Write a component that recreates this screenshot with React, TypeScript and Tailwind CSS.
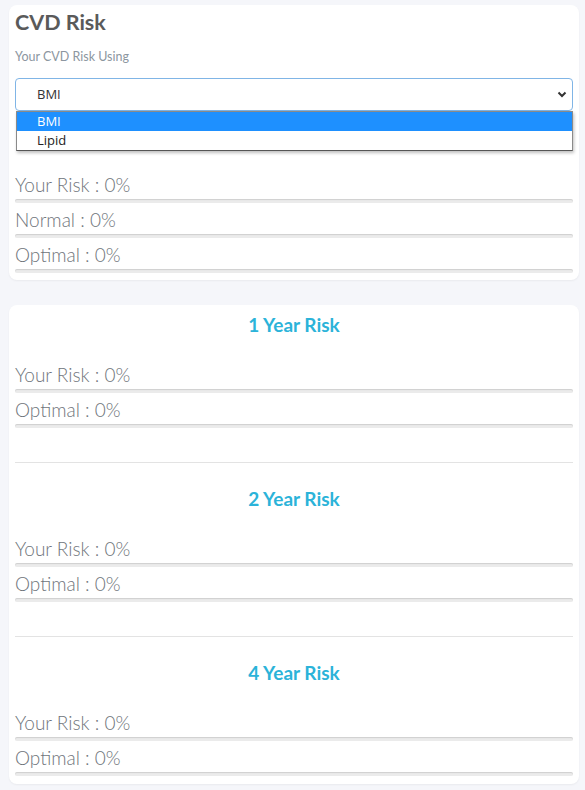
import React from "react";

const font = { fontFamily: "Lato, 'Open Sans', sans-serif" };

function Row({ label }: { label: string }) {
  return (
    <div className="flex flex-col">
      <div className="h-[28px] leading-[28px] text-[19px] font-light text-[#6f757b]">{label} : 0%</div>
      <div className="h-[4px] rounded-full bg-[#ebebeb] shadow-[inset_0_1px_1px_rgba(0,0,0,0.12)]" />
    </div>
  );
}

function Section({ title, last }: { title: string; last?: boolean }) {
  return (
    <div className="flex flex-col">
      <div className="h-[28px] leading-[28px] text-center text-[19px] font-bold text-[#2bb3d9]">{title}</div>
      <div className="mt-[22px] flex flex-col gap-[3px]">
        <Row label="Your Risk" />
        <Row label="Optimal" />
      </div>
      {!last && <div className="mt-[34px] mb-[22px] h-px bg-[#e3e3e3]" />}
    </div>
  );
}

export default function App() {
  return (
    <div className="min-h-[790px] bg-[#f5f6fa] pl-[9px] pr-[6px] pt-[5px] pb-[7px]" style={font}>
      <div className="rounded-[8px] bg-white px-[6px] pt-[6px] pb-[7px] shadow-[0_1px_2px_rgba(0,0,0,0.05)]">
        <div className="h-[22px] leading-[22px] text-[21.5px] font-bold text-[#5a5a5a]">CVD Risk</div>
        <div className="mt-[16px] h-[16px] leading-[16px] text-[12.5px] text-[#8c96a0]">Your CVD Risk Using</div>
        <div className="relative mt-[13px]">
          <div className="flex h-[33px] items-center justify-between rounded-[4px] border border-[#80b5e6] pl-[21px] pr-[5px] text-[13px] text-[#333]" style={{ fontFamily: "'Open Sans', sans-serif" }}>
            <span>BMI</span>
            <svg width="10" height="7" viewBox="0 0 10 7">
              <polyline points="1.5,1.5 5,5 8.5,1.5" fill="none" stroke="#333" strokeWidth="2" />
            </svg>
          </div>
          <div className="absolute left-[1px] right-0 top-[33px] z-10 border border-[#8a8a8a] border-b-[#555] bg-white text-[13px] shadow-[1px_2px_3px_rgba(0,0,0,0.25)]" style={{ fontFamily: "'Open Sans', sans-serif" }}>
            <div className="h-[19px] leading-[19px] bg-[#1e90ff] pl-[20px] text-white">BMI</div>
            <div className="h-[19px] leading-[19px] pl-[20px] text-[#222]">Lipid</div>
          </div>
        </div>
        <div className="mt-[60px] flex flex-col gap-[3px]">
          <Row label="Your Risk" />
          <Row label="Normal" />
          <Row label="Optimal" />
        </div>
      </div>
      <div className="mt-[25px] rounded-[8px] bg-white px-[6px] pt-[6px] pb-[8px] shadow-[0_1px_2px_rgba(0,0,0,0.05)]">
        <Section title="1 Year Risk" />
        <Section title="2 Year Risk" />
        <Section title="4 Year Risk" last />
      </div>
    </div>
  );
}
